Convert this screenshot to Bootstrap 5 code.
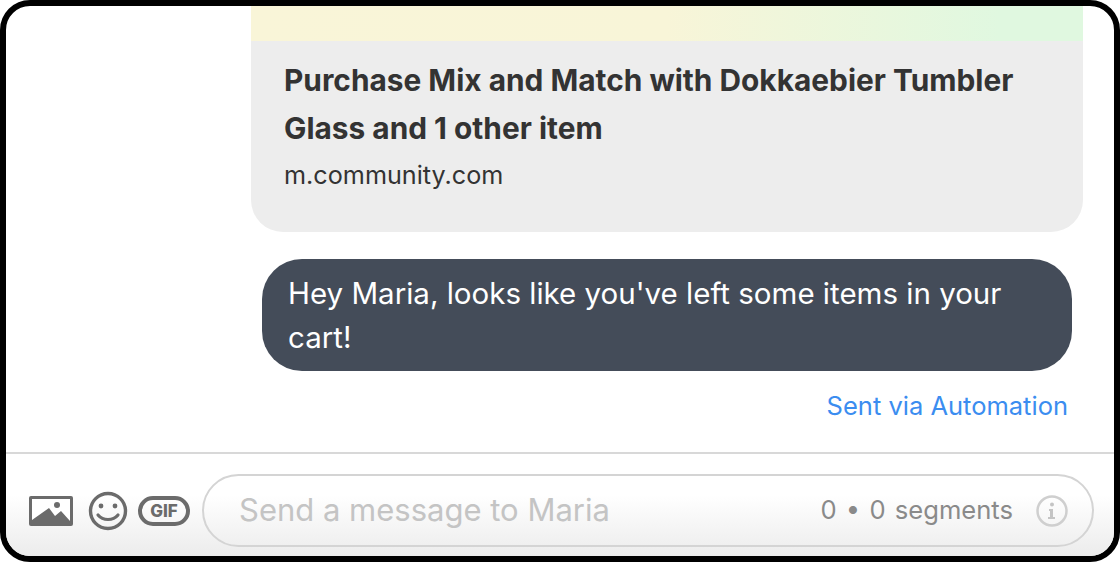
<!DOCTYPE html>
<html lang="en"><head><meta charset="utf-8"><title>Chat</title>
<link href="https://cdn.jsdelivr.net/npm/bootstrap@5.3.0/dist/css/bootstrap.min.css" rel="stylesheet">
<style>
html,body{height:562px;overflow:hidden;background:#fff;margin:0}
body{font-family:Inter,"Liberation Sans",sans-serif}
.frame-box{width:1120px;height:562px;border:6px solid #000;border-radius:30px;overflow:hidden;background:#fff}
.thread-area{height:446px;padding-right:31px;padding-left:245px}
.link-card{background:#ededed;border-radius:0 0 32px 32px;height:226px;width:832px;overflow:hidden}
.link-hero{height:35px;background:linear-gradient(90deg,#f9f5d8 0%,#f8f5d8 50%,#e0f8e0 90%,#e0f8e0 100%)}
.link-body{padding:15px 33px 0}
.link-title{font-size:29.85px;line-height:48px;font-weight:700;color:#333;margin:0;width:750px}
.link-host{font-size:25.2px;line-height:30px;color:#333;margin-top:8px}
.bubble-msg{background:#444c59;color:#fff;width:810px;height:112px;border-radius:40px;margin:27px 0 0 11px;padding:12px 26px;font-size:29.5px;line-height:44px}
.via-text{color:#3b8df0;font-size:25.5px;line-height:30px;text-align:right;margin:20px 15px 0 0}
.composer-bar{height:104px;border-top:2px solid #d8d8d8;background:linear-gradient(#fff 40%,#ececec 100%);padding:20px 20px 0 23px;gap:0}
.field-box{height:73px;flex:1;border:2px solid #d4d4d4;border-radius:37px;padding:0 24px 0 35px;margin-left:12px}
.ph-text{font-size:31px;color:#c4c4c4}
.count-text{font-size:25.6px;color:#8a8a8a;margin-right:23px;word-spacing:2px}
.tool-icon{display:block;flex:none}
</style></head><body>
<div class="frame-box d-flex flex-column">
<div class="thread-area flex-grow-0">
 <div class="link-card">
  <div class="link-hero"></div>
  <div class="link-body">
   <p class="link-title">Purchase Mix and Match with Dokkaebier Tumbler Glass and 1 other item</p>
   <div class="link-host">m.community.com</div>
  </div>
 </div>
 <div class="bubble-msg">Hey Maria, looks like you've left some items in your cart!</div>
 <div class="via-text">Sent via Automation</div>
</div>
<div class="composer-bar d-flex align-items-start">
 <div class="d-flex align-items-center" style="height:73px;gap:15px">
 <svg class="tool-icon" width="44" height="30" viewBox="0 0 44 30"><rect width="44" height="30" rx="2" fill="#6b6b6b"/><path d="M3 3h38v22l-9-10-6 5-6-8L3 24z" fill="#fff"/><circle cx="28" cy="9" r="3" fill="#6b6b6b"/></svg>
 <svg class="tool-icon" width="40" height="40" viewBox="0 0 40 40"><circle cx="20" cy="20" r="17.5" fill="none" stroke="#6b6b6b" stroke-width="3.4"/><circle cx="13" cy="15" r="2.4" fill="#6b6b6b"/><circle cx="27" cy="15" r="2.4" fill="#6b6b6b"/><path d="M10 24c5 6 15 6 20 0" fill="none" stroke="#6b6b6b" stroke-width="3.2" stroke-linecap="round"/></svg>
 <svg class="tool-icon" style="margin-left:-5px" width="52" height="30" viewBox="0 0 52 30"><rect x="2" y="2" width="48" height="26" rx="13" fill="none" stroke="#6b6b6b" stroke-width="4"/><text x="26" y="21" text-anchor="middle" font-family="Inter,sans-serif" font-size="17" font-weight="800" fill="#6b6b6b">GIF</text></svg>
 </div>
 <div class="field-box d-flex align-items-center">
  <span class="ph-text flex-grow-1">Send a message to Maria</span>
  <span class="count-text">0 • 0 segments</span>
  <svg class="tool-icon" width="32" height="32" viewBox="0 0 32 32"><circle cx="16" cy="16" r="14.5" fill="none" stroke="#cfcfcf" stroke-width="2.5"/><circle cx="16" cy="9.5" r="2" fill="#c4c4c4"/><path d="M13 14h4v8h2v2h-7v-2h2v-6h-1z" fill="#c4c4c4"/></svg>
 </div>
</div>
</div>
</body></html>
